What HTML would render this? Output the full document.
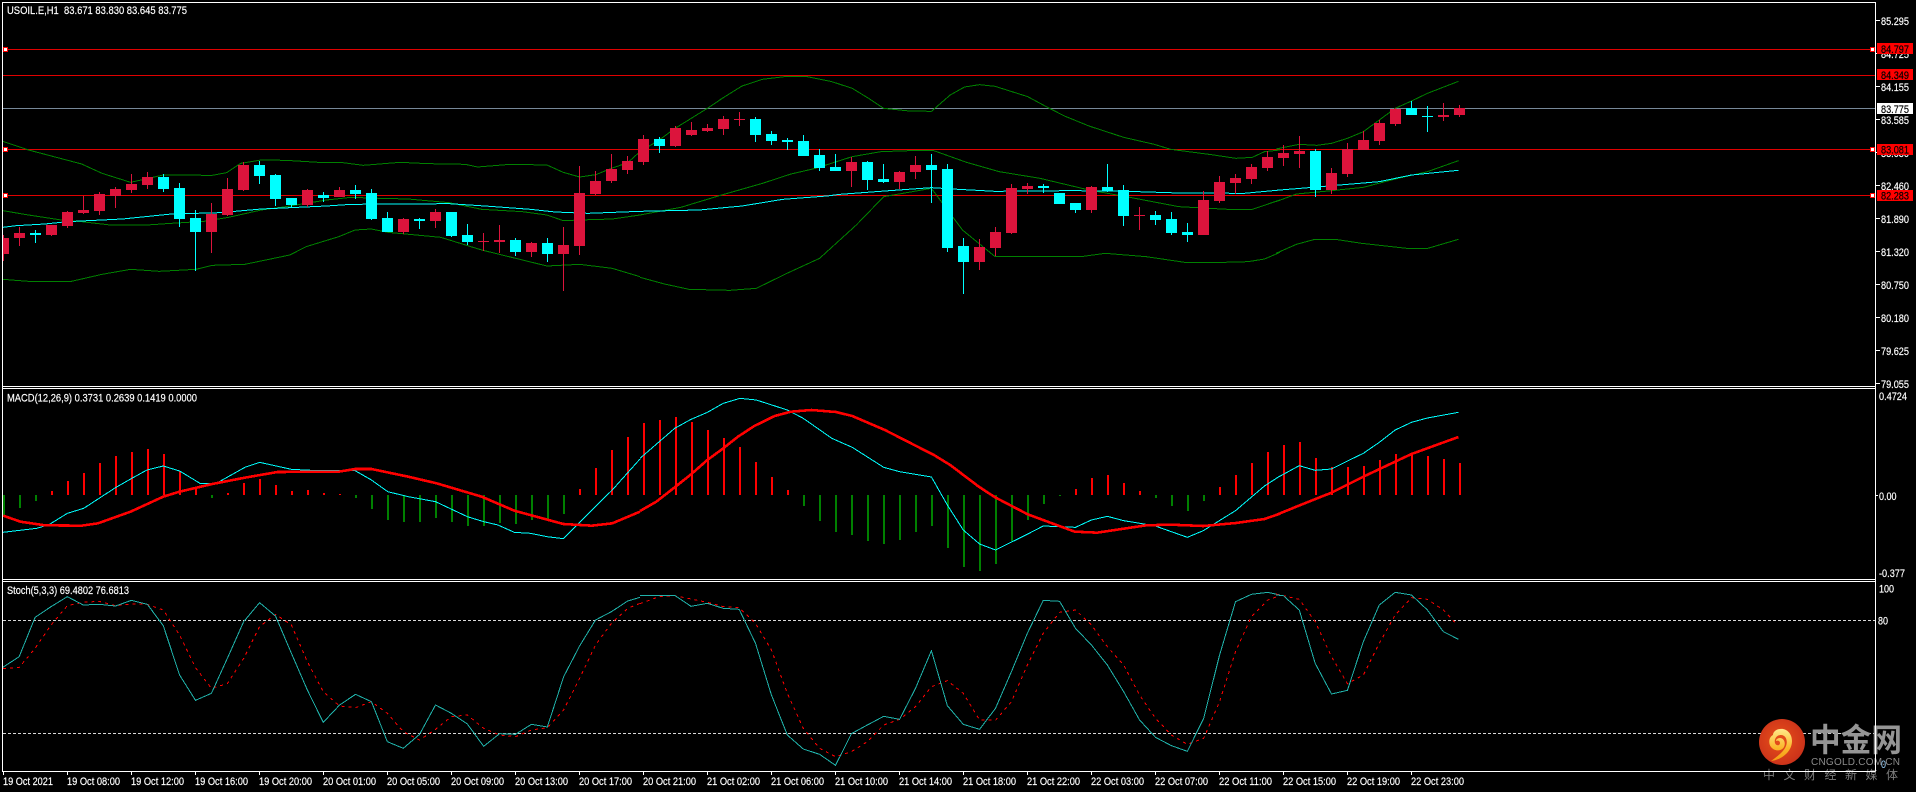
<!DOCTYPE html>
<html><head><meta charset="utf-8"><title>USOIL.E,H1</title>
<style>
html,body{margin:0;padding:0;background:#000;width:1916px;height:792px;overflow:hidden}
svg{display:block}
text{font-family:"Liberation Sans","Noto Sans CJK SC",sans-serif;font-size:11px;fill:#fff;white-space:pre}
.w text,text.w{stroke:#fff;stroke-width:.18px}
.k text{fill:#000;stroke:#000;stroke-width:.18px}
.l{fill:none;vector-effect:non-scaling-stroke;shape-rendering:crispEdges}
.c{shape-rendering:crispEdges;fill:none}
</style></head><body>
<svg xmlns="http://www.w3.org/2000/svg" width="1916" height="792" viewBox="0 0 1916 792">
<defs>
<clipPath id="a"><rect x="3" y="3" width="1872" height="768"/></clipPath>
<radialGradient id="g1" cx="45%" cy="45%" r="60%"><stop offset="0" stop-color="#e8501a"/><stop offset="1" stop-color="#c9301a"/></radialGradient>
<linearGradient id="g2" x1="0" y1="0" x2="0" y2="1"><stop offset="0" stop-color="#ffe98a"/><stop offset=".6" stop-color="#fbb52a"/><stop offset="1" stop-color="#f49a12"/></linearGradient>
</defs>
<rect width="1916" height="792" fill="#000"/>

<g clip-path="url(#a)">
<!-- Horizontal levels -->
<g class="c" stroke-width="1">
<path stroke="#e00000" d="M3 49.5H1875M3 75.5H1875M3 149.5H1875M3 195.5H1875"/>
<path stroke="#778899" d="M3 108.5H1875"/>
</g>

<!-- Bollinger / MA main -->
<g transform="scale(.40816,.33333)">
<polyline class="l" stroke="#008000" stroke-width="1" points="7,424 70,450 200,492 250,520 320,547 400,525 520,526 555,518 590,490 640,480 700,481 780,487 840,488 890,496 980,487 1050,491 1140,493 1170,501 1250,493 1340,495 1380,517 1420,531 1460,524 1498,505 1538,488 1568,455"/>
<polyline class="l" stroke="#008000" stroke-width="1" points="7,632 70,645 150,660 200,665 270,675 360,675 420,670 500,664 560,652 640,630 700,620 800,600 860,592 930,595 1000,597 1100,608 1180,628 1280,635 1340,645 1380,662 1420,660 1500,657 1568,645"/>
<polyline class="l" stroke="#008000" stroke-width="1" points="7,838 70,844 175,844 250,823 320,808 390,814 480,808 520,796 600,793 710,765 750,740 830,710 870,690 910,687 950,697 1080,712 1180,750 1340,798 1420,793 1500,805 1568,830"/>
<polyline class="l" stroke="#00ffff" stroke-width="1" points="7,682 40,677 110,672 165,665 300,657 420,642 540,638 640,627 800,618 860,613 1100,611 1200,619 1300,628 1360,636 1440,640 1568,634"/>
</g>
<g transform="translate(640,0) scale(.40816,.33333)">
<polyline class="l" stroke="#008000" stroke-width="1" points="0,447 20,440 47,420 86,385 165,325 204,293 250,258 300,238 360,229 410,230 470,245 520,265 560,295 597,325 660,333 714,334 760,285 795,261 832,254 870,259 950,290 1000,323 1040,348 1100,378 1185,412 1260,433 1300,448 1400,464 1460,475 1500,472 1530,455 1568,450"/>
<polyline class="l" stroke="#008000" stroke-width="1" points="0,645 100,622 200,585 300,550 370,522 430,505 520,470 590,455 660,452 720,452 800,487 880,515 980,535 1100,570 1200,592 1320,620 1440,628 1500,628 1568,600"/>
<polyline class="l" stroke="#008000" stroke-width="1" points="0,832 60,852 120,868 220,871 285,865 360,820 440,775 530,675 597,590 714,565 790,690 870,770 1080,770 1140,760 1240,770 1340,788 1430,787 1490,785 1530,777 1568,757"/>
<polyline class="l" stroke="#00ffff" stroke-width="1" points="0,634 145,630 250,618 350,598 458,588 490,583 600,573 714,563 780,568 870,574 1050,572 1170,573 1320,579 1480,580 1568,570"/>
</g>
<g transform="translate(1276,0) scale(.40816,.33333)">
<polyline class="l" stroke="#008000" stroke-width="1" points="0,447 57,433 100,436 136,430 175,415 214,395 253,360 292,325 332,303 371,280 447,244"/>
<polyline class="l" stroke="#008000" stroke-width="1" points="0,605 50,582 136,572 214,562 292,537 371,515 447,482"/>
<polyline class="l" stroke="#008000" stroke-width="1" points="0,760 50,733 95,718 145,718 210,730 320,745 372,745 447,718"/>
<polyline class="l" stroke="#00ffff" stroke-width="1" points="0,571 100,561 175,553 253,545 332,525 447,511"/>
</g>

<!-- Candles -->
<g class="c">
<path stroke="#dc143c" stroke-width="1" d="M3.5 235V261M19.5 227V246M51.5 225V236M67.5 211V228M83.5 196V214M99.5 192V215M115.5 187V208M131.5 174V193M147.5 172V189M211.5 203V253M227.5 178V216M243.5 162V191M307.5 189V207M339.5 187V197M403.5 218V234M435.5 209V228M483.5 233V251M499.5 225V253M531.5 242V257M563.5 227V291M579.5 166V255M595.5 171V195M611.5 154V183M627.5 156V174M643.5 135V165M675.5 126V147M691.5 122V136M707.5 124V132M723.5 116V135M739.5 112V126M851.5 157V187M899.5 171V189M915.5 156V179M979.5 239V270M995.5 227V256M1011.5 184V234M1027.5 183V194M1091.5 186V213M1139.5 207V230M1203.5 191V235M1219.5 176V203M1235.5 174V194M1251.5 164V184M1267.5 151V171M1283.5 145V166M1299.5 136V168M1331.5 168V194M1347.5 143V177M1363.5 131V150M1379.5 120V145M1395.5 108V126M1443.5 103V121M1459.5 105V117"/>
<path stroke="#dc143c" stroke-width="11" d="M3.5 238V254M19.5 233V238M51.5 225V235M67.5 212V226M83.5 210V213M99.5 194V211M115.5 189V196M131.5 184V190M147.5 177V185M211.5 214V232M227.5 189V215M243.5 165V190M307.5 190V205M339.5 190V197M403.5 219V232M435.5 212V221M483.5 241V242M499.5 240V242M531.5 243V252M563.5 245V254M579.5 193V246M595.5 181V194M611.5 169V181M627.5 161V170M643.5 139V162M675.5 128V146M691.5 130V135M707.5 128V131M723.5 119V129M739.5 119V120M851.5 162V171M899.5 172V182M915.5 165V172M979.5 247V262M995.5 232V248M1011.5 188V233M1027.5 186V189M1091.5 187V210M1139.5 215V216M1203.5 200V235M1219.5 182V201M1235.5 178V183M1251.5 167V179M1267.5 157V168M1283.5 153V158M1299.5 151V154M1331.5 173V190M1347.5 149V174M1363.5 140V150M1379.5 123V141M1395.5 109V124M1443.5 115V117M1459.5 108V115"/>
<path stroke="#00ffff" stroke-width="1" d="M35.5 230V243M163.5 174V192M179.5 183V227M195.5 210V271M259.5 161V184M275.5 174V206M291.5 198V207M323.5 192V202M355.5 185V199M371.5 189V220M387.5 212V232M419.5 218V229M451.5 212V237M467.5 224V245M515.5 238V256M547.5 238V262M659.5 137V153M755.5 117V142M771.5 131V145M787.5 138V150M803.5 135V156M819.5 149V171M835.5 154V171M867.5 161V190M883.5 164V183M931.5 154V203M947.5 164V252M963.5 238V294M1043.5 184V193M1059.5 193V204M1075.5 203V213M1107.5 164V192M1123.5 185V226M1155.5 211V225M1171.5 212V235M1187.5 223V242M1315.5 149V197M1411.5 101V115M1427.5 106V132"/>
<path stroke="#00ffff" stroke-width="11" d="M35.5 233V235M163.5 177V189M179.5 188V219M195.5 218V232M259.5 165V176M275.5 175V199M291.5 198V205M323.5 195V198M355.5 190V194M371.5 193V219M387.5 218V232M419.5 219V221M451.5 212V236M467.5 235V242M515.5 240V252M547.5 243V254M659.5 139V146M755.5 119V135M771.5 134V141M787.5 140V142M803.5 141V156M819.5 155V168M835.5 167V171M867.5 162V180M883.5 179V182M931.5 165V170M947.5 169V248M963.5 246V262M1043.5 186V188M1059.5 193V204M1075.5 203V210M1107.5 187V191M1123.5 190V216M1155.5 215V220M1171.5 219V233M1187.5 232V235M1315.5 151V190M1411.5 108V115M1427.5 116V117"/>
</g>

<!-- MACD histogram -->
<g class="c" stroke-width="2">
<path stroke="#ff0000" d="M52 491V495M68 481V495M84 473V495M100 463V495M116 456V495M132 452V495M148 449V495M164 454V495M180 471V495M196 489V495M228 493V495M244 483V495M260 479V495M276 485V495M292 491V495M308 490V495M324 493V495M340 494V495M580 489V495M596 468V495M612 450V495M628 437V495M644 423V495M660 420V495M676 417V495M692 422V495M708 430V495M724 438V495M740 447V495M756 462V495M772 477V495M788 490V495M1076 489V495M1092 478V495M1108 475V495M1124 483V495M1140 491V495M1220 487V495M1236 475V495M1252 463V495M1268 452V495M1284 445V495M1300 442V495M1316 458V495M1332 467V495M1348 467V495M1364 466V495M1380 460V495M1396 454V495M1412 453V495M1428 456V495M1444 459V495M1460 463V495"/>
<path stroke="#008000" d="M4 495V516M20 495V508M36 495V501M212 495V498M356 495V498M372 495V509M388 495V520M404 495V522M420 495V522M436 495V518M452 495V522M468 495V526M484 495V526M500 495V523M516 495V524M532 495V520M548 495V520M564 495V514M804 495V506M820 495V521M836 495V532M852 495V535M868 495V541M884 495V544M900 495V540M916 495V532M932 495V526M948 495V548M964 495V567M980 495V571M996 495V564M1012 495V541M1028 495V520M1044 495V504M1060 495V496M1156 495V498M1172 495V506M1188 495V511M1204 495V501"/>
</g>

<!-- MACD lines -->
<g transform="translate(0,380) scale(.40816,.33333)">
<polyline class="l" stroke="#00ffff" stroke-width="1" points="7,457 90,445 120,434 165,400 205,385 283,323 320,297 360,270 400,258 440,273 490,310 530,310 600,262 636,247 714,268 780,272 870,272 910,300 950,335 1000,350 1067,365 1145,410 1185,425 1220,435 1260,457 1300,460 1340,470 1380,476 1500,330 1568,237"/>
<polyline class="l" stroke="#ff0000" stroke-width="2.6" points="8,407 50,425 110,436 200,437 240,430 320,395 400,350 440,335 520,312 600,293 680,276 830,275 870,267 910,267 1000,290 1070,310 1180,350 1260,392 1380,432 1450,437 1500,430 1568,395"/>
</g>
<g transform="translate(640,380) scale(.40816,.33333)">
<polyline class="l" stroke="#00ffff" stroke-width="1" points="0,235 85,145 125,118 165,97 204,70 245,55 285,60 361,90 400,115 470,175 520,202 597,262 636,275 714,291 753,375 792,450 832,492 871,510 950,462 988,438 1067,442 1106,420 1145,409 1185,422 1260,437 1341,472 1380,452 1459,392 1530,318 1568,288"/>
<polyline class="l" stroke="#ff0000" stroke-width="2.6" points="0,393 40,365 85,322 125,283 165,240 204,205 240,170 280,138 330,108 370,95 420,90 480,96 520,108 600,150 720,225 760,255 830,320 870,352 950,403 1065,455 1120,458 1240,436 1300,434 1380,438 1460,429 1530,417 1568,401"/>
</g>
<g transform="translate(1276,380) scale(.40816,.33333)">
<polyline class="l" stroke="#00ffff" stroke-width="1" points="0,295 57,257 96,271 136,267 175,243 214,220 253,187 292,150 332,127 371,114 447,97"/>
<polyline class="l" stroke="#ff0000" stroke-width="2.6" points="0,405 60,375 136,338 214,290 292,245 332,222 447,171"/>
</g>

<!-- Stoch levels -->
<g class="c"><path stroke="#d8d8d8" stroke-width="1" stroke-dasharray="3 2" d="M3 620.5H1875M3 733.5H1875"/></g>

<!-- Stoch lines -->
<g transform="translate(0,575) scale(.40816,.33333)">
<polyline class="l" stroke="#ff0000" stroke-width="1" stroke-dasharray="3 4" points="7,281 47,277 86,220 125,150 165,92 204,82 243,79 283,92 322,87 361,88 400,105 440,180 479,278 518,340 557,326 597,250 636,155 675,118 714,150 753,260 792,350 832,393 871,398 910,380 949,415 988,470 1028,495 1067,463 1106,425 1145,420 1185,460 1224,480 1263,485 1302,465 1341,458 1381,405 1420,310 1459,210 1498,145 1538,100 1568,85"/>
<polyline class="l" stroke="#20b2aa" stroke-width="1" points="7,277 47,245 86,127 125,95 165,65 204,90 243,88 283,93 322,76 361,88 400,152 440,300 479,376 518,355 557,250 597,140 636,83 675,123 714,235 753,345 792,442 832,390 871,358 910,380 949,500 988,520 1028,478 1067,390 1106,415 1145,447 1185,514 1224,476 1263,478 1302,448 1341,456 1381,305 1420,213 1459,135 1498,110 1538,78 1568,67"/>
</g>
<g transform="translate(640,575) scale(.40816,.33333)">
<polyline class="l" stroke="#ff0000" stroke-width="1" stroke-dasharray="3 4" points="0,86 47,65 86,62 125,72 165,82 204,95 243,98 283,145 322,225 361,355 400,460 440,520 479,545 518,530 557,500 597,450 636,433 675,395 714,335 753,317 792,355 832,435 871,436 910,380 949,270 988,175 1028,112 1067,105 1106,150 1145,215 1185,270 1224,360 1263,430 1302,480 1341,508 1381,490 1420,380 1459,230 1498,125 1538,75 1568,62"/>
<polyline class="l" stroke="#20b2aa" stroke-width="1" points="0,62 47,62 86,62 125,94 165,85 204,100 243,103 283,205 322,360 361,480 400,522 440,538 479,571 518,476 557,450 597,424 636,433 675,340 714,227 753,392 792,448 832,463 871,400 910,290 949,175 988,76 1028,79 1067,160 1106,210 1145,270 1185,350 1224,435 1263,487 1302,512 1341,529 1381,430 1420,240 1459,80 1498,58 1538,52 1568,60"/>
</g>
<g transform="translate(1276,575) scale(.40816,.33333)">
<polyline class="l" stroke="#ff0000" stroke-width="1" stroke-dasharray="3 4" points="0,57 57,73 96,140 136,245 175,326 214,300 253,205 292,120 332,68 371,73 410,105 443,148"/>
<polyline class="l" stroke="#20b2aa" stroke-width="1" points="0,60 18,62 57,105 96,265 136,357 175,346 214,200 253,90 292,52 332,60 371,105 410,170 447,193"/>
</g>

<!-- Anchor squares -->
<g class="c">
<path fill="#ff0000" d="M3 47h5v5h-5zM3 147h5v5h-5zM3 193h5v5h-5zM1870 47h5v5h-5zM1870 147h5v5h-5zM1870 193h5v5h-5z"/>
<path fill="#fff" d="M4 48h3v3h-3zM4 148h3v3h-3zM4 194h3v3h-3zM1871 48h3v3h-3zM1871 148h3v3h-3zM1871 194h3v3h-3z"/>
</g>
</g>

<!-- Legends -->
<g class="w">
<text x="7" y="14" textLength="180" lengthAdjust="spacingAndGlyphs">USOIL.E,H1  83.671 83.830 83.645 83.775</text>
<text x="7" y="401.500" textLength="190" lengthAdjust="spacingAndGlyphs">MACD(12,26,9) 0.3731 0.2639 0.1419 0.0000</text>
<text x="7" y="594" textLength="122" lengthAdjust="spacingAndGlyphs">Stoch(5,3,3) 69.4802 76.6813</text>
</g>

<!-- Axis ticks -->
<g class="c" stroke="#fff" stroke-width="1">
<path d="M1876 20.500h4M1876 53.500h4M1876 86.500h4M1876 119.500h4M1876 152.500h4M1876 185.500h4M1876 218.500h4M1876 251.500h4M1876 284.500h4M1876 317.500h4M1876 350.500h4M1876 383.500h4M1876 495.500h2M3.500 771v4M67.500 771v4M131.500 771v4M195.500 771v4M259.500 771v4M323.500 771v4M387.500 771v4M451.500 771v4M515.500 771v4M579.500 771v4M643.500 771v4M707.500 771v4M771.500 771v4M835.500 771v4M899.500 771v4M963.500 771v4M1027.500 771v4M1091.500 771v4M1155.500 771v4M1219.500 771v4M1283.500 771v4M1347.500 771v4M1411.500 771v4"/>
</g>

<!-- Price axis -->
<g class="w">
<text x="1881" y="25" textLength="28" lengthAdjust="spacingAndGlyphs">85.295</text>
<text x="1881" y="58" textLength="28" lengthAdjust="spacingAndGlyphs">84.725</text>
<text x="1881" y="91" textLength="28" lengthAdjust="spacingAndGlyphs">84.155</text>
<text x="1881" y="124" textLength="28" lengthAdjust="spacingAndGlyphs">83.585</text>
<text x="1881" y="157" textLength="28" lengthAdjust="spacingAndGlyphs">83.030</text>
<text x="1881" y="190" textLength="28" lengthAdjust="spacingAndGlyphs">82.460</text>
<text x="1881" y="223" textLength="28" lengthAdjust="spacingAndGlyphs">81.890</text>
<text x="1881" y="256" textLength="28" lengthAdjust="spacingAndGlyphs">81.320</text>
<text x="1881" y="289" textLength="28" lengthAdjust="spacingAndGlyphs">80.750</text>
<text x="1881" y="322" textLength="28" lengthAdjust="spacingAndGlyphs">80.180</text>
<text x="1881" y="355" textLength="28" lengthAdjust="spacingAndGlyphs">79.625</text>
<text x="1881" y="388" textLength="28" lengthAdjust="spacingAndGlyphs">79.055</text>
<text x="1879" y="400" textLength="28" lengthAdjust="spacingAndGlyphs">0.4724</text>
<text x="1879" y="500" textLength="17.500" lengthAdjust="spacingAndGlyphs">0.00</text>
<text x="1879" y="577" textLength="26" lengthAdjust="spacingAndGlyphs">-0.377</text>
<text x="1879" y="592.500" textLength="15" lengthAdjust="spacingAndGlyphs">100</text>
<text x="1878" y="624.500" textLength="10" lengthAdjust="spacingAndGlyphs">80</text>
</g>
<g class="c">
<rect x="1877" y="43" width="36" height="11" fill="#ff0000"/>
<rect x="1877" y="69" width="36" height="11" fill="#ff0000"/>
<rect x="1877" y="103" width="36" height="11" fill="#ffffff"/>
<rect x="1877" y="144" width="36" height="11" fill="#ff0000"/>
<rect x="1877" y="190" width="36" height="11" fill="#ff0000"/>
</g>
<g class="k">
<text x="1881" y="53" textLength="28" lengthAdjust="spacingAndGlyphs">84.797</text>
<text x="1881" y="79" textLength="28" lengthAdjust="spacingAndGlyphs">84.349</text>
<text x="1881" y="113" textLength="28" lengthAdjust="spacingAndGlyphs">83.775</text>
<text x="1881" y="153.500" textLength="28" lengthAdjust="spacingAndGlyphs">83.081</text>
<text x="1881" y="199.500" textLength="28" lengthAdjust="spacingAndGlyphs">82.283</text>
</g>

<!-- Time axis -->
<g class="w">
<text x="3" y="785" textLength="50" lengthAdjust="spacingAndGlyphs">19 Oct 2021</text>
<text x="67" y="785" textLength="53" lengthAdjust="spacingAndGlyphs">19 Oct 08:00</text>
<text x="131" y="785" textLength="53" lengthAdjust="spacingAndGlyphs">19 Oct 12:00</text>
<text x="195" y="785" textLength="53" lengthAdjust="spacingAndGlyphs">19 Oct 16:00</text>
<text x="259" y="785" textLength="53" lengthAdjust="spacingAndGlyphs">19 Oct 20:00</text>
<text x="323" y="785" textLength="53" lengthAdjust="spacingAndGlyphs">20 Oct 01:00</text>
<text x="387" y="785" textLength="53" lengthAdjust="spacingAndGlyphs">20 Oct 05:00</text>
<text x="451" y="785" textLength="53" lengthAdjust="spacingAndGlyphs">20 Oct 09:00</text>
<text x="515" y="785" textLength="53" lengthAdjust="spacingAndGlyphs">20 Oct 13:00</text>
<text x="579" y="785" textLength="53" lengthAdjust="spacingAndGlyphs">20 Oct 17:00</text>
<text x="643" y="785" textLength="53" lengthAdjust="spacingAndGlyphs">20 Oct 21:00</text>
<text x="707" y="785" textLength="53" lengthAdjust="spacingAndGlyphs">21 Oct 02:00</text>
<text x="771" y="785" textLength="53" lengthAdjust="spacingAndGlyphs">21 Oct 06:00</text>
<text x="835" y="785" textLength="53" lengthAdjust="spacingAndGlyphs">21 Oct 10:00</text>
<text x="899" y="785" textLength="53" lengthAdjust="spacingAndGlyphs">21 Oct 14:00</text>
<text x="963" y="785" textLength="53" lengthAdjust="spacingAndGlyphs">21 Oct 18:00</text>
<text x="1027" y="785" textLength="53" lengthAdjust="spacingAndGlyphs">21 Oct 22:00</text>
<text x="1091" y="785" textLength="53" lengthAdjust="spacingAndGlyphs">22 Oct 03:00</text>
<text x="1155" y="785" textLength="53" lengthAdjust="spacingAndGlyphs">22 Oct 07:00</text>
<text x="1219" y="785" textLength="53" lengthAdjust="spacingAndGlyphs">22 Oct 11:00</text>
<text x="1283" y="785" textLength="53" lengthAdjust="spacingAndGlyphs">22 Oct 15:00</text>
<text x="1347" y="785" textLength="53" lengthAdjust="spacingAndGlyphs">22 Oct 19:00</text>
<text x="1411" y="785" textLength="53" lengthAdjust="spacingAndGlyphs">22 Oct 23:00</text>
</g>

<!-- Logo -->
<g>
<circle cx="1782" cy="742" r="23" fill="url(#g1)"/>
<path fill="url(#g2)" d="M1771 761C1781 760 1792 752 1792 741C1792 733 1786 728 1780 729C1776 729 1773 732 1773 735C1769 737 1768 743 1771 747C1774 751 1781 752 1784 747C1786 743 1784 738 1780 738C1778 738 1776 739 1776 741C1778 740 1780 741 1780 743C1780 746 1776 746 1775 743C1774 740 1776 735 1781 735C1786 735 1788 741 1786 746C1783 753 1776 757 1771 761Z"/>
<text x="1810" y="751" style="font-family:'Noto Sans CJK SC',sans-serif;font-size:32px;font-weight:700;fill:#959595" textLength="92" lengthAdjust="spacingAndGlyphs">中金网</text>
<text x="1811" y="765" style="font-size:10px;fill:#8a8a8a" textLength="89" lengthAdjust="spacing">CNGOLD.COM.CN</text>
<text x="1763 1783.500 1804 1824.500 1845 1865.500 1886" y="779" style="font-family:'Noto Sans CJK SC',sans-serif;font-size:12px;fill:#7c7c7c">中文财经新媒体</text>
</g>
<text x="1881" y="768" style="fill:#9fd4ff;font-size:11px" textLength="5" lengthAdjust="spacingAndGlyphs">0</text>

<!-- Frame -->
<g class="c" stroke="#fff" stroke-width="1">
<path d="M2 2.500H1875.500M2.500 2V771.500M1875.500 2V771.500M2 386.500H1875M2 388.500H1875M2 579.500H1875M2 581.500H1875M2 771.500H1875.500"/>
</g>
</svg>
</body></html>
